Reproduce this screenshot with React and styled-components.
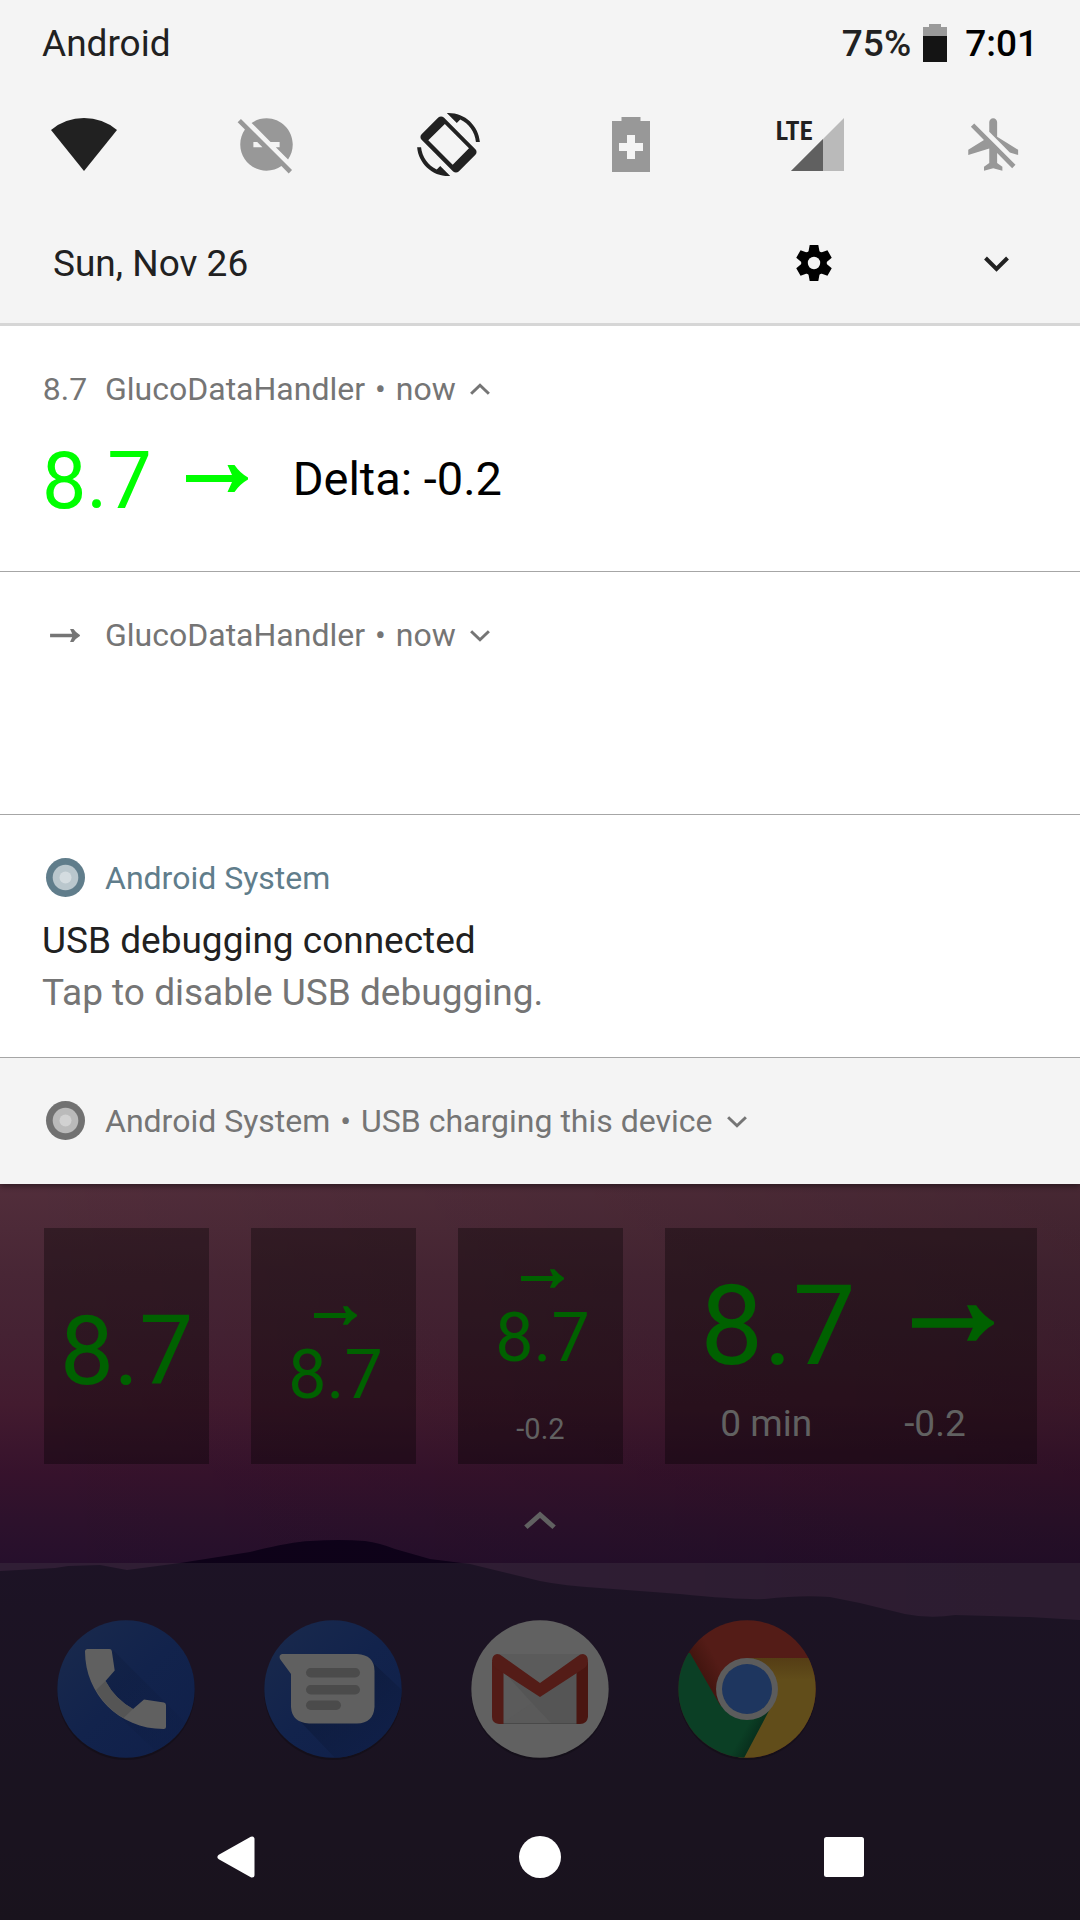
import React from "react";
import styled, { createGlobalStyle } from "styled-components";

const GlobalStyle = createGlobalStyle`
  *, *::before, *::after { box-sizing: border-box; }
  body {
    margin: 0;
    background: #1b131e;
    font-family: Roboto, "Noto Sans", sans-serif;
    color: #212121;
  }
  h2, p { margin: 0; font-weight: 400; }
`;

const Screen = styled.div`
  display: flex;
  flex-direction: column;
  min-height: 100vh;
`;

const Shade = styled.div`
  position: relative;
  z-index: 1;
  box-shadow: 0 2px 6px rgba(0, 0, 0, 0.45);
`;

/* Quick settings */

const QuickSettings = styled.header`
  background: #f4f4f4;
  border-bottom: 3px solid #d6d6d6;
`;

const StatusRow = styled.div`
  display: flex;
  align-items: center;
  justify-content: space-between;
  height: 86px;
  padding: 0 42px;
  font-size: 37px;
`;

const StatusGroup = styled.div`
  display: flex;
  align-items: center;
  gap: 12px;
  font-weight: 500;
`;

const Clock = styled.time`
  margin-left: 6px;
  color: #000;
`;

const IconButton = styled.button`
  display: flex;
  align-items: center;
  justify-content: center;
  width: ${(p) => p.$size || 84}px;
  height: ${(p) => p.$size || 84}px;
  padding: 0;
  border: 0;
  background: none;
  color: ${(p) => p.$color || "#212121"};
  font: inherit;
`;

const TileRow = styled.div`
  display: flex;
  align-items: center;
  justify-content: space-between;
  height: 118px;
  padding: 0 43px 2px 42px;
`;

const SignalIcon = styled.span`
  position: relative;
  display: flex;
  width: 68px;
  height: 53px;
  margin-right: 6px;
  flex: none;
  justify-content: flex-end;
`;

const NetworkLabel = styled.span`
  position: absolute;
  left: 0;
  top: 0;
  font: 700 26px/26px "Liberation Sans Narrow", "Roboto Condensed", Roboto, sans-serif;
`;

const DateRow = styled.div`
  display: flex;
  align-items: center;
  height: 119px;
  padding: 0 42px 0 53px;
  font-size: 37px;
`;

const DateText = styled.time`
  flex: 1;
`;

const DateActions = styled.div`
  display: flex;
  gap: 98px;
`;

/* Notifications */

const Notification = styled.article`
  padding: 39px 42px ${(p) => (p.$muted ? 39 : 38)}px;
  background: ${(p) => (p.$muted ? "#f4f4f4" : "#fff")};
  border-bottom: ${(p) => (p.$muted ? "0" : "1px solid #a6a6a6")};
`;

const NotificationHeader = styled.div`
  display: flex;
  align-items: center;
  height: 48px;
  font-size: 32px;
  color: ${(p) => p.$color || "#757575"};
`;

const IconSlot = styled.span`
  display: flex;
  flex: none;
  align-items: center;
  justify-content: center;
  width: 46px;
  margin-right: 17px;
`;

const Bullet = styled.span`
  margin: 0 10px;
`;

const Body = styled.div`
  min-height: ${(p) => p.$height || 104}px;
  margin-top: 13px;
`;

const ReadingBody = styled(Body)`
  display: flex;
  align-items: center;
  padding-bottom: 2px;
`;

const Reading = styled.span`
  font-size: ${(p) => p.$size}px;
  line-height: ${(p) => p.$size}px;
  color: ${(p) => p.$color || "#006100"};
`;

const RowReading = styled(Reading)`
  padding-top: 6px;
`;

const Delta = styled.span`
  margin-left: 45px;
  font-size: 47px;
  color: #000;
`;

const ArrowSpace = styled.span`
  display: flex;
  margin-left: 34px;
`;

const Title = styled.h2`
  font-size: 37px;
  line-height: 52px;
`;

const Message = styled.p`
  font-size: 37px;
  line-height: 52px;
  color: #757575;
`;

/* Home screen */

const Home = styled.main`
  position: relative;
  display: flex;
  flex: 1;
  flex-direction: column;
  background:
    linear-gradient(90deg, rgba(0, 0, 0, 0), rgba(0, 0, 0, 0.14)),
    linear-gradient(#522e3b 0, #482635 90px, #452233 150px, #431b2f 220px, #36122c 290px, #2c112c 340px, #260f2c 380px, #260f2c 100%);
`;

const Hills = styled.svg`
  position: absolute;
  left: 0;
  bottom: 0;
  width: 100%;
  height: 380px;
`;

const Widgets = styled.section`
  position: relative;
  display: grid;
  grid-template-columns: repeat(5, 1fr);
  gap: 42px;
  padding: 44px 43px 0 44px;
`;

const Widget = styled.div`
  display: flex;
  flex-direction: column;
  align-items: center;
  height: 236px;
  padding-top: ${(p) => p.$top}px;
  background: rgba(0, 0, 0, 0.33);
  color: #616161;
  white-space: nowrap;
`;

const WideWidget = styled(Widget)`
  grid-column: span 2;
`;

const Trend = styled.div`
  display: flex;
  flex-direction: column;
  align-items: center;
  gap: 16px;
  padding-left: 4px;
`;

const SmallDelta = styled.span`
  margin-top: 40px;
  font-size: 29px;
  line-height: 34px;
`;

const WideTop = styled.div`
  display: flex;
  align-items: center;
  gap: 56px;
  padding-right: 8px;
`;

const WideBottom = styled.div`
  display: flex;
  gap: 92px;
  margin-top: 20px;
  padding-right: 16px;
  font-size: 37px;
  line-height: 44px;
`;

const DrawerHandle = styled.div`
  position: relative;
  display: flex;
  flex: 1;
  align-items: center;
  justify-content: center;
  min-height: 99px;
  padding-top: 14px;
`;

const Hotseat = styled.div`
  position: relative;
  background: rgba(97, 97, 97, 0.19);
`;

const Apps = styled.nav`
  display: grid;
  grid-template-columns: repeat(5, 1fr);
  justify-items: center;
  padding: 57px 23px 36px 22px;
`;

const SystemNav = styled.nav`
  display: flex;
  align-items: center;
  justify-content: center;
  gap: 220px;
  height: 126px;
`;

const ARROW =
  "M0 10H46L41.500 0H48.500Q54 8 62 12.500V14.500Q54 19 48.500 27H41.500L46 17H0Z";

function Arrow({ width, height, color }) {
  return (
    <svg width={width} height={height} viewBox="0 0 62 27" aria-hidden="true">
      <path d={ARROW} fill={color} />
    </svg>
  );
}

function Chevron({ width, height, up, stroke, color = "currentColor" }) {
  const i = stroke * 0.75;
  const y1 = up ? height - i : i;
  const y2 = up ? i : height - i;
  return (
    <svg width={width} height={height} viewBox={`0 0 ${width} ${height}`} aria-hidden="true">
      <path
        d={`M${i * 0.5} ${y1}L${width / 2} ${y2}L${width - i * 0.5} ${y1}`}
        fill="none"
        stroke={color}
        strokeWidth={stroke}
      />
    </svg>
  );
}

function MaterialIcon({ children }) {
  return (
    <svg width="63" height="63" viewBox="0 0 24 24" fill="currentColor" aria-hidden="true">
      {children}
    </svg>
  );
}

function SystemIcon({ color, mid, inner }) {
  return (
    <svg width="40" height="40" viewBox="0 0 40 40" aria-hidden="true">
      <circle cx="20.500" cy="19.500" r="19.500" fill={color} />
      <circle cx="20.500" cy="19.500" r="12.800" fill={mid} />
      <circle cx="20.500" cy="19.500" r="6" fill={inner} />
    </svg>
  );
}

function Gear() {
  return (
    <svg width="38" height="38" viewBox="-19 -18 38 38" aria-hidden="true">
      <g fill="#000">
        {[0, 60, 120, 180, 240, 300].map((a) => (
          <path key={a} transform={`rotate(${a})`} d="M-4.300 -18H4.300L5.500 -11.500L7 -6H-7L-5.500 -11.500Z" />
        ))}
        <circle r="12.800" />
      </g>
      <circle r="6.200" fill="#f4f4f4" />
    </svg>
  );
}

function Header({ icon, app, detail, color, expanded }) {
  return (
    <NotificationHeader $color={color}>
      <IconSlot>{icon}</IconSlot>
      <span>{app}</span>
      {detail && (
        <>
          <Bullet>•</Bullet>
          <span>{detail}</span>
          <IconButton $size={48} $color="#757575" aria-label={expanded ? "Collapse" : "Expand"}>
            <Chevron width={20} height={13} stroke={3} up={expanded} />
          </IconButton>
        </>
      )}
    </NotificationHeader>
  );
}

function AppCircle({ children }) {
  return (
    <svg width="138" height="138" viewBox="0 0 138 138" overflow="visible" aria-hidden="true">
      <defs>
        <clipPath id="disc">
          <circle cx="69" cy="69" r="68.700" />
        </clipPath>
        <linearGradient id="blue" x1="0" y1="0" x2="1" y2="1">
          <stop offset="0" stopColor="#1a2a4c" />
          <stop offset="0.5" stopColor="#12234c" />
          <stop offset="1" stopColor="#10204a" />
        </linearGradient>
        <linearGradient id="cast" x1="0" y1="0" x2="1" y2="1">
          <stop offset="0.3" stopColor="#0d1a3a" />
          <stop offset="1" stopColor="#10204a" />
        </linearGradient>
      </defs>
      <circle cx="69" cy="71" r="69" fill="#000" opacity="0.2" />
      <g clipPath="url(#disc)">{children}</g>
    </svg>
  );
}

function PhoneApp() {
  return (
    <AppCircle>
      <rect width="138" height="138" fill="url(#blue)" />
      <path d="M56 30L138 112V138H106L70 104L40 72L50 60Z" fill="url(#cast)" opacity="0.3" />
      <path
        d="M30.500 29H52.500Q54.500 29 54.800 31L57.700 50.500L48.500 61Q58 79 76 89L87 79.500L107 82.500Q109 83 109 85V106.500Q109 109 106.500 109C62 109 28 74 28 31.500Q28 29 30.500 29Z"
        fill="#606060"
      />
      <path d="M39 70L48.500 61Q58 79 76 89L66.500 98Q49 88 39 70Z" fill="#555" />
    </AppCircle>
  );
}

function MessagesApp() {
  return (
    <AppCircle>
      <rect width="138" height="138" fill="url(#blue)" />
      <path d="M107 41L138 70V138H71L33 98Z" fill="url(#cast)" opacity="0.7" />
      <path
        d="M18 34H93Q110.500 35 110.500 51V87Q109.500 103 93 103.500H45Q28 102.500 27 87V54L16 39Q14.500 35 18 34Z"
        fill="#606060"
      />
      <rect x="42" y="48" width="54" height="9.500" rx="4.700" fill="#4b4b4b" />
      <rect x="42" y="65" width="54" height="9.500" rx="4.700" fill="#4b4b4b" />
      <rect x="42" y="80.500" width="35" height="9.500" rx="4.700" fill="#4b4b4b" />
    </AppCircle>
  );
}

function MailApp() {
  return (
    <AppCircle>
      <rect width="138" height="138" fill="#616161" />
      <rect x="26" y="34" width="86" height="70" fill="#5b5b5b" />
      <path d="M32 51L80 104H106V52L69 77Z" fill="#555" />
      <path d="M32 103L61 83L80 103Z" fill="#5a5a5a" />
      <path d="M32 103.500H106" stroke="#494949" />
      <path d="M21 42H32.500V104H28Q21 103 21 97Z" fill="#531b16" />
      <path d="M105.500 42H117V97Q116 104 109 104H105.500Z" fill="#4a1611" />
      <path
        d="M21 41Q21 35 26 34Q29 34 31 36L69 63L107 36Q109 34 112 34Q117 35 117 41Q117 46 112 49L69 77L26 49Q21 46 21 41Z"
        fill="#541c17"
      />
    </AppCircle>
  );
}

function BrowserApp() {
  return (
    <AppCircle>
      <defs>
        <linearGradient id="redFold" gradientUnits="userSpaceOnUse" x1="26" y1="60" x2="44" y2="50">
          <stop offset="0" stopColor="#42150f" />
          <stop offset="1" stopColor="#541c17" />
        </linearGradient>
        <linearGradient id="yellowFold" gradientUnits="userSpaceOnUse" x1="0" y1="38" x2="0" y2="60">
          <stop offset="0" stopColor="#553d15" />
          <stop offset="1" stopColor="#614d1a" />
        </linearGradient>
        <linearGradient id="greenFold" gradientUnits="userSpaceOnUse" x1="84" y1="112" x2="70" y2="104">
          <stop offset="0" stopColor="#072c1b" />
          <stop offset="1" stopColor="#0b3f25" />
        </linearGradient>
      </defs>
      <rect width="138" height="138" fill="url(#redFold)" />
      <path d="M69 38H138V138H60L90 80Z" fill="url(#yellowFold)" />
      <path d="M12 33L42 85L69 100L93 87L65 140H0V33Z" fill="url(#greenFold)" />
      <circle cx="69" cy="69" r="31" fill="#5c5c5c" />
      <circle cx="69" cy="69" r="25" fill="#1e365f" />
    </AppCircle>
  );
}

const apps = [
  { name: "Phone", Icon: PhoneApp },
  { name: "Messages", Icon: MessagesApp },
  { name: "Gmail", Icon: MailApp },
  { name: "Chrome", Icon: BrowserApp },
];

export default function App() {
  return (
    <Screen>
      <GlobalStyle />
      <Shade>
        <QuickSettings>
          <StatusRow>
            <span>Android</span>
            <StatusGroup>
              <span>75%</span>
              <svg width="24" height="38" viewBox="0 0 24 38" aria-hidden="true">
                <path d="M6 0H18V3H24V12H0V3H6Z" fill="#9a9a9a" />
                <path d="M0 12H24V38H0Z" fill="#141414" />
              </svg>
              <Clock>7:01</Clock>
            </StatusGroup>
          </StatusRow>
          <TileRow>
            <IconButton aria-label="Wi-Fi">
              <svg width="66" height="53" viewBox="0 0 66 53" aria-hidden="true">
                <path d="M0 12A51.400 51.400 0 0 1 66 12L33 53Z" fill="#212121" />
              </svg>
            </IconButton>
            <IconButton $color="#989898" aria-label="Do not disturb">
              <MaterialIcon>
                <path d="M17 11v2h-1.460l4.680 4.680C21.340 16.070 22 14.110 22 12c0-5.520-4.480-10-10-10-2.110 0-4.070.66-5.680 1.780L13.540 11H17zM2.270 2.270L1 3.540l2.780 2.780C2.660 7.930 2 9.890 2 12c0 5.520 4.480 10 10 10 2.110 0 4.070-.66 5.680-1.780L20.460 23l1.270-1.270L2.270 2.270zM7 13v-2h1.460l2 2H7z" />
              </MaterialIcon>
            </IconButton>
            <IconButton aria-label="Auto-rotate">
              <MaterialIcon>
                <path d="M16.480 2.520c3.270 1.550 5.610 4.720 5.970 8.480h1.500C23.440 4.840 18.290 0 12 0l-.66.03 3.810 3.810 1.330-1.320zM7.520 21.480C4.250 19.940 1.910 16.760 1.550 13H.05C.56 19.160 5.710 24 12 24l.66-.03-3.810-3.810-1.330 1.320z" />
                <path
                  fillRule="evenodd"
                  d="M10.230 1.750c-.59-.59-1.540-.59-2.120 0L1.750 8.110c-.59.59-.59 1.540 0 2.120l12.020 12.020c.59.59 1.540.59 2.120 0l6.360-6.360c.59-.59.59-1.540 0-2.120L10.230 1.750zM10.600 4.200L19.800 13.400L13.600 19.700L4.300 10.400Z"
                />
              </MaterialIcon>
            </IconButton>
            <IconButton $color="#989898" aria-label="Battery saver">
              <svg width="38" height="55" viewBox="0 0 38 55" aria-hidden="true">
                <path
                  fillRule="evenodd"
                  fill="currentColor"
                  d="M9.500 0H28.500V4H38V55H0V4H9.500ZM15 18V26H7V34H15V42H23V34H31V26H23V18Z"
                />
              </svg>
            </IconButton>
            <IconButton aria-label="Mobile network">
              <SignalIcon>
                <NetworkLabel>LTE</NetworkLabel>
                <svg width="53" height="53" viewBox="0 0 53 53" aria-hidden="true">
                  <path d="M0 53L53 0V53Z" fill="#bababa" />
                  <path d="M0 53L32 21V53Z" fill="#606060" />
                </svg>
              </SignalIcon>
            </IconButton>
            <IconButton $color="#989898" aria-label="Airplane mode">
              <MaterialIcon>
                <path d="M13 9V3.500c0-.83-.67-1.500-1.500-1.500S10 2.670 10 3.500v3.680l7.830 7.830L21 16v-2l-8-5zM3 5.270l4.990 4.990L2 14v2l8-2.500V19l-2 1.500V22l3.500-1 3.500 1v-1.500L13 19v-3.730L18.730 21 20 19.730 4.270 4 3 5.270z" />
              </MaterialIcon>
            </IconButton>
          </TileRow>
          <DateRow>
            <DateText>Sun, Nov 26</DateText>
            <DateActions>
              <IconButton aria-label="Settings">
                <Gear />
              </IconButton>
              <IconButton aria-label="Expand quick settings">
                <Chevron width={25} height={17} stroke={4} />
              </IconButton>
            </DateActions>
          </DateRow>
        </QuickSettings>

        <Notification>
          <Header icon={<span>8.7</span>} app="GlucoDataHandler" detail="now" expanded />
          <ReadingBody $height={107}>
            <RowReading $size={79} $color="#00ff00">8.7</RowReading>
            <ArrowSpace>
              <Arrow width={62} height={27} color="#00ff00" />
            </ArrowSpace>
            <Delta>Delta: -0.2</Delta>
          </ReadingBody>
        </Notification>

        <Notification>
          <Header
            icon={<Arrow width={30} height={13} color="#757575" />}
            app="GlucoDataHandler"
            detail="now"
          />
          <Body />
        </Notification>

        <Notification>
          <Header
            icon={<SystemIcon color="#607d8b" mid="#bac7cd" inner="#d4dce0" />}
            app="Android System"
            color="#607d8b"
          />
          <Body>
            <Title>USB debugging connected</Title>
            <Message>Tap to disable USB debugging.</Message>
          </Body>
        </Notification>

        <Notification $muted>
          <Header
            icon={<SystemIcon color="#717171" mid="#bababa" inner="#d1d1d1" />}
            app="Android System"
            detail="USB charging this device"
          />
        </Notification>
      </Shade>

      <Home>
        <Hills viewBox="0 0 1080 380" preserveAspectRatio="none" aria-hidden="true">
          <defs>
            <linearGradient id="ground" x1="0" y1="0" x2="0" y2="1">
              <stop offset="0" stopColor="#0e0219" />
              <stop offset="1" stopColor="#09020e" />
            </linearGradient>
          </defs>
          <path
            d="M0 31L55 28L68 26L100 25L127 30L180 23L250 12Q290 2 310 1Q340 -1 365 1Q380 3 395 9L430 19L470 24L540 41Q565 46 600 48L680 54Q740 60 765 59Q800 55 830 57L860 63L905 74Q930 79 955 75L1030 77L1080 80V380H0Z"
            fill="url(#ground)"
          />
        </Hills>
        <Widgets>
          <Widget $top={75}>
            <Reading $size={96}>8.7</Reading>
          </Widget>
          <Widget $top={78}>
            <Trend>
              <Arrow width={43} height={19} color="#006100" />
              <Reading $size={68}>8.7</Reading>
            </Trend>
          </Widget>
          <Widget $top={41}>
            <Trend>
              <Arrow width={43} height={19} color="#006100" />
              <Reading $size={68}>8.7</Reading>
            </Trend>
            <SmallDelta>-0.2</SmallDelta>
          </Widget>
          <WideWidget $top={36}>
            <WideTop>
              <RowReading $size={112}>8.7</RowReading>
              <Arrow width={82} height={36} color="#006100" />
            </WideTop>
            <WideBottom>
              <span>0 min</span>
              <span>-0.2</span>
            </WideBottom>
          </WideWidget>
        </Widgets>
        <DrawerHandle>
          <Chevron width={32} height={20} stroke={5} up color="#616161" />
        </DrawerHandle>
        <Hotseat>
          <Apps aria-label="Favorite apps">
            {apps.map(({ name, Icon }) => (
              <IconButton key={name} $size={138} aria-label={name}>
                <Icon />
              </IconButton>
            ))}
          </Apps>
          <SystemNav aria-label="System navigation">
            <IconButton aria-label="Back">
              <svg width="38" height="44" viewBox="0 0 38 44" aria-hidden="true">
                <path d="M3 22L35 4V40Z" fill="#fff" stroke="#fff" strokeWidth="5" strokeLinejoin="round" />
              </svg>
            </IconButton>
            <IconButton aria-label="Home">
              <svg width="42" height="42" viewBox="0 0 42 42" aria-hidden="true">
                <circle cx="21" cy="21" r="21" fill="#fff" />
              </svg>
            </IconButton>
            <IconButton aria-label="Recent apps">
              <svg width="40" height="40" viewBox="0 0 40 40" aria-hidden="true">
                <rect width="40" height="40" rx="2.500" fill="#fff" />
              </svg>
            </IconButton>
          </SystemNav>
        </Hotseat>
      </Home>
    </Screen>
  );
}
